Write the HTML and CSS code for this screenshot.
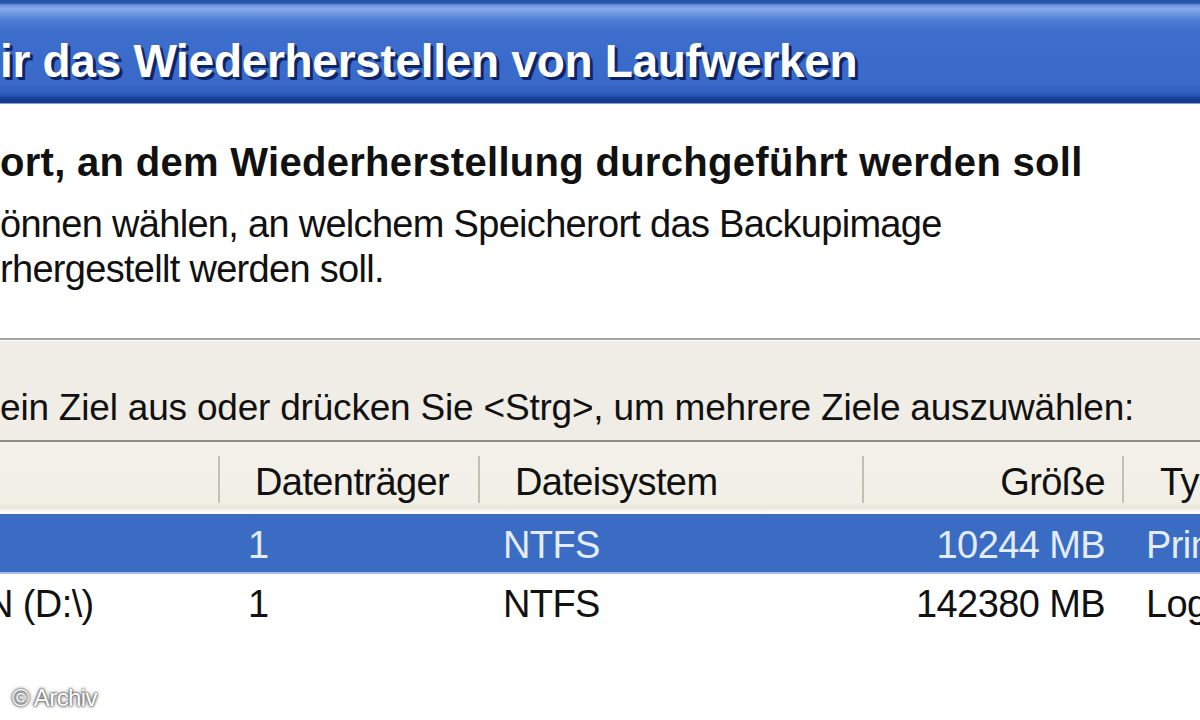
FILE: index.html
```html
<!DOCTYPE html>
<html lang="de">
<head>
<meta charset="utf-8">
<title>Wiederherstellen von Laufwerken</title>
<link rel="stylesheet" href="styles.css">
</head>
<body>
<div class="window">
  <div class="titlebar">ir das Wiederherstellen von Laufwerken</div>
  <div class="intro">
    <div class="heading">ort, an dem Wiederherstellung durchgeführt werden soll</div>
    <div class="desc">önnen wählen, an welchem Speicherort das Backupimage<br>rhergestellt werden soll.</div>
  </div>
  <div class="sep"></div>
  <div class="panel">
    <div class="instruction">ein Ziel aus oder drücken Sie &lt;Strg&gt;, um mehrere Ziele auszuwählen:</div>
  </div>
  <div class="list">
    <div class="list-header">
      <div class="hcell c1"></div>
      <div class="hcell c2 div">Datenträger</div>
      <div class="hcell c3 div">Dateisystem</div>
      <div class="hcell c4 div">Größe</div>
      <div class="hcell c5 div">Ty</div>
    </div>
    <div class="row selected">
      <div class="cell c1"></div>
      <div class="cell c2">1</div>
      <div class="cell c3">NTFS</div>
      <div class="cell c4">10244 MB</div>
      <div class="cell c5">Prin</div>
    </div>
    <div class="row">
      <div class="cell c1 cut">N (D:\)</div>
      <div class="cell c2">1</div>
      <div class="cell c3">NTFS</div>
      <div class="cell c4">142380 MB</div>
      <div class="cell c5">Log</div>
    </div>
  </div>
</div>
<div class="watermark">© Archiv</div>
</body>
</html>
```

FILE: styles.css
```css
html, body {
  margin: 0;
  padding: 0;
}
body {
  width: 1200px;
  height: 720px;
  overflow: hidden;
  background: #ffffff;
  font-family: "Liberation Sans", Arial, sans-serif;
  color: #111111;
  position: relative;
}
.window {
  width: 1200px;
}
.titlebar {
  height: 104px;
  box-sizing: border-box;
  padding-top: 41px;
  line-height: 40px;
  font-size: 46px;
  font-weight: bold;
  letter-spacing: -0.3px;
  color: #ffffff;
  white-space: nowrap;
  text-shadow: 3px 3px 0 #0d2565, 2px 2px 1px #14307a;
  background: linear-gradient(to bottom,
    #2250a6 0px, #2a58ae 3px, #6b92de 5px, #8aabea 9px, #7399e2 13px,
    #4e7dd6 20px, #3f6fcd 30px, #3b6bca 60px, #3a69c8 84px,
    #3462c2 90px, #2a58b8 95px, #173f96 98px, #123790 103px, #ffffff 104px);
}
.intro {
  padding: 38px 0 46px 0;
  white-space: nowrap;
}
.heading {
  font-size: 40px;
  line-height: 40px;
  font-weight: bold;
  letter-spacing: 0.3px;
  margin-bottom: 20px;
}
.desc {
  font-size: 38px;
  line-height: 45px;
  letter-spacing: -0.7px;
}
.sep {
  border-top: 2px solid #a4a29b;
  border-bottom: 1px solid #ffffff;
}
.panel {
  background: #efede5;
  padding: 47px 0 12px 0;
  border-bottom: 2px solid #8f8e88;
}
.instruction {
  font-size: 37px;
  line-height: 40px;
  white-space: nowrap;
  letter-spacing: -0.2px;
}
.list-header,
.row {
  display: grid;
  grid-template-columns: 218px 260px 384px 260px 1fr;
  white-space: nowrap;
  font-size: 38px;
  letter-spacing: -0.6px;
}
.list-header {
  height: 72px;
  box-sizing: border-box;
  padding-top: 8px;
  line-height: 64px;
  background: linear-gradient(to bottom, #f3f1e9 0px, #f1efe6 60px, #e9e6da 66px, #f8f7f2 69px, #ffffff 72px);
}
.hcell.div {
  background: linear-gradient(#c3c0b2, #c3c0b2) left 6px / 2px 47px no-repeat;
}
.hcell.c2 { padding-left: 37px; }
.hcell.c3 { padding-left: 37px; }
.hcell.c4 { padding-right: 17px; text-align: right; }
.hcell.c5 { padding-left: 38px; overflow: hidden; }
.row {
  height: 60px;
  line-height: 60px;
  background: #ffffff;
}
.row.selected {
  height: 58px;
  line-height: 62px;
  background: #3a6cc4;
  color: #e4ecfa;
  border-bottom: 2px solid #a8c0e6;
}
.cell { overflow: hidden; }
.cell.c2 { padding-left: 30px; }
.cell.c3 { padding-left: 25px; }
.cell.c4 { padding-right: 17px; text-align: right; }
.cell.c5 { padding-left: 24px; }
.cell.cut { text-indent: -14px; }
.watermark {
  position: absolute;
  left: 12px;
  top: 684px;
  font-size: 24px;
  line-height: 28px;
  color: #ffffff;
  letter-spacing: -0.6px;
  text-shadow: 0 0 2px #444, 0 0 3px #666, 0 0 4px #888;
}
```
